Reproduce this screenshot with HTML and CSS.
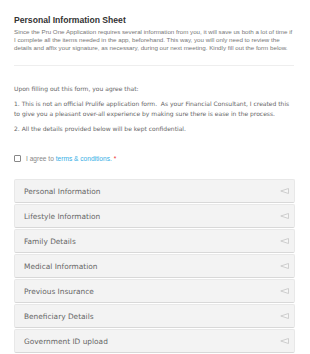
FILE: index.html
```html
<!DOCTYPE html>
<html lang="en">
<head>
  <meta charset="UTF-8" />
  <meta name="viewport" content="width=device-width, initial-scale=1.0"/>
  <title>Personal Information Sheet</title>
  <link rel="stylesheet" href="styles.css">
</head>
<body>

  <div class="intro">
    <h1>Personal Information Sheet</h1>
    <p>Since the Pru One Application requires several information from you, it will save us both a lot of time if I complete all the items needed in the app, beforehand. This way, you will only need to review the details and affix your signature, as necessary, during our next meeting. Kindly fill out the form below.</p>
  </div>

  <div class="terms">
    <p>Upon filling out this form, you agree that:</p>
    <p>1. This is not an official Prulife application form.&nbsp; As your Financial Consultant, I created this to give you a pleasant over-all experience by making sure there is ease in the process.</p>
    <p>2. All the details provided below will be kept confidential.</p>
  </div>

  <label class="agree">
    <input type="checkbox" />
    <span>I agree to <a href="#">terms &amp; conditions.</a> <em>*</em></span>
  </label>

  <div class="sections">
    <div class="section">Personal Information <svg viewBox="0 0 9 6"><path d="M8.5 0.5 L0.8 3 L8.5 5.5 Z" /></svg></div>
    <div class="section">Lifestyle Information <svg viewBox="0 0 9 6"><path d="M8.5 0.5 L0.8 3 L8.5 5.5 Z" /></svg></div>
    <div class="section">Family Details <svg viewBox="0 0 9 6"><path d="M8.5 0.5 L0.8 3 L8.5 5.5 Z" /></svg></div>
    <div class="section">Medical Information <svg viewBox="0 0 9 6"><path d="M8.5 0.5 L0.8 3 L8.5 5.5 Z" /></svg></div>
    <div class="section">Previous Insurance <svg viewBox="0 0 9 6"><path d="M8.5 0.5 L0.8 3 L8.5 5.5 Z" /></svg></div>
    <div class="section">Beneficiary Details <svg viewBox="0 0 9 6"><path d="M8.5 0.5 L0.8 3 L8.5 5.5 Z" /></svg></div>
    <div class="section">Government ID upload <svg viewBox="0 0 9 6"><path d="M8.5 0.5 L0.8 3 L8.5 5.5 Z" /></svg></div>
  </div>

</body>
</html>
```

FILE: styles.css
```css
* {
  box-sizing: border-box;
}

body {
  margin: 0;
  padding: 15px 15px 0 14px;
  background-color: #fff;
  font-family: "Liberation Sans", Arial, sans-serif;
  color: #777;
}

.intro {
  border-bottom: 1px solid #eee;
  padding-bottom: 14px;
  margin-right: 1px;
}

h1 {
  margin: 0 0 2px;
  font-size: 8.6px;
  line-height: 11px;
  color: #333;
}

.intro p {
  margin: 0;
  font-size: 6.2px;
  line-height: 7.8px;
}

.terms {
  margin-top: 18px;
  font-family: "DejaVu Sans", Verdana, sans-serif;
  font-size: 6px;
  color: #666;
}

.terms p {
  margin: 0 0 5px;
  line-height: 9.7px;
}

.agree {
  display: flex;
  align-items: center;
  gap: 5px;
  margin-top: 22px;
  font-size: 6.6px;
  color: #888;
}

.agree input {
  margin: 0;
  width: 7px;
  height: 7px;
  appearance: none;
  border: 1px solid #888;
  border-radius: 1px;
  background: #fff;
}

.agree a {
  color: #35aee5;
  text-decoration: none;
}

.agree em {
  font-style: normal;
  color: #e33;
}

.sections {
  margin-top: 17px;
  display: flex;
  flex-direction: column;
  gap: 1px;
}

.section {
  height: 24px;
  display: flex;
  align-items: center;
  justify-content: space-between;
  padding: 0 5px 0 9px;
  background-color: #f3f3f3;
  border: 1px solid #e8e8e8;
  border-bottom-color: #d8d8d8;
  border-radius: 2px;
  font-family: "DejaVu Sans", Verdana, sans-serif;
  font-size: 7.4px;
  color: #666;
}

.section svg {
  width: 9px;
  height: 6px;
}

.section path {
  fill: #f6f6f6;
  stroke: #c4c4c4;
  stroke-width: 0.8;
  stroke-linejoin: round;
}
```
